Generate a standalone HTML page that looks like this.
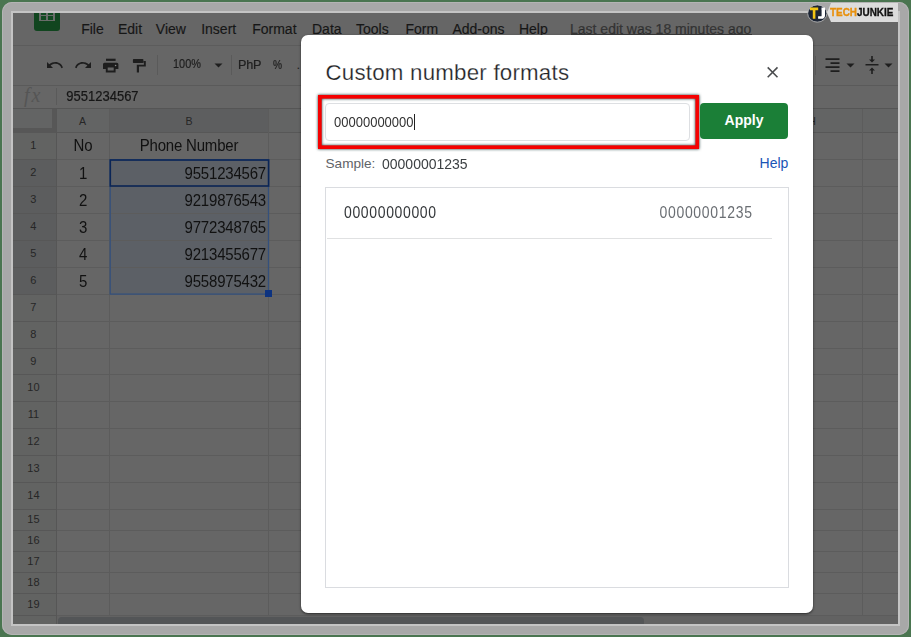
<!DOCTYPE html>
<html><head><meta charset="utf-8">
<style>
*{margin:0;padding:0;box-sizing:border-box}
html,body{width:911px;height:637px;overflow:hidden;background:#4a7550;font-family:"Liberation Sans",sans-serif}
.t{position:absolute;line-height:1;white-space:nowrap;font-family:"Liberation Sans",sans-serif}
.b{position:absolute}
#frame{position:absolute;left:2.4px;top:2.4px;width:906.3px;height:632.3px;border-radius:10px;background:#a8a8a8;box-shadow:inset 0 0 0 1px #b4b4b4}
#inner{position:absolute;left:11px;top:11px;width:889px;height:615px;background:#c4c4c4}
#sheet{position:absolute;left:0;top:0;width:911px;height:637px;clip-path:inset(13px 13px 13px 13px);background:#666666}
.hl{position:absolute;height:1px;background:#5c5c5c}
.vl{position:absolute;width:1px;background:#5c5c5c}
.menu{font-size:14px;color:#161616;-webkit-text-stroke:0.15px #161616}
.rn{font-size:11px;color:#262626;text-align:center;width:43px;left:13px}
.cell{font-size:15px;color:#111;letter-spacing:-0.2px;transform:scaleY(1.08);transform-origin:0 84.65%}
</style></head><body>
<div id="frame"></div>
<div id="inner"></div>
<div id="sheet">

<div class="hl" style="left:13px;top:45px;width:885px;background:#5c5c5c"></div>
<div class="hl" style="left:13px;top:85px;width:885px;background:#5a5a5a"></div>
<div class="hl" style="left:13px;top:108px;width:885px;background:#555555"></div>
<div class="b" style="left:13px;top:109px;width:43px;height:516px;background:#626362"></div>
<div class="b" style="left:13px;top:109px;width:885px;height:23px;background:#636464"></div>
<div class="b" style="left:110px;top:109px;width:158px;height:23px;background:#5d5e5f"></div>
<div class="b" style="left:13px;top:160px;width:43px;height:134px;background:#5c5d5e"></div>
<div class="b" style="left:110px;top:159px;width:159px;height:135px;background:#5c6066"></div>
<div class="hl" style="left:13px;top:132px;width:885px"></div>
<div class="hl" style="left:13px;top:159px;width:885px"></div>
<div class="hl" style="left:13px;top:186px;width:885px"></div>
<div class="hl" style="left:13px;top:213px;width:885px"></div>
<div class="hl" style="left:13px;top:240px;width:885px"></div>
<div class="hl" style="left:13px;top:267px;width:885px"></div>
<div class="hl" style="left:13px;top:294px;width:885px"></div>
<div class="hl" style="left:13px;top:321px;width:885px"></div>
<div class="hl" style="left:13px;top:348px;width:885px"></div>
<div class="hl" style="left:13px;top:374px;width:885px"></div>
<div class="hl" style="left:13px;top:401px;width:885px"></div>
<div class="hl" style="left:13px;top:428px;width:885px"></div>
<div class="hl" style="left:13px;top:455px;width:885px"></div>
<div class="hl" style="left:13px;top:482px;width:885px"></div>
<div class="hl" style="left:13px;top:509px;width:885px"></div>
<div class="hl" style="left:13px;top:530px;width:885px"></div>
<div class="hl" style="left:13px;top:551px;width:885px"></div>
<div class="hl" style="left:13px;top:572px;width:885px"></div>
<div class="hl" style="left:13px;top:593px;width:885px"></div>
<div class="hl" style="left:13px;top:615px;width:885px"></div>
<div class="hl" style="left:13px;top:132px;width:885px;background:#575757"></div>
<div class="vl" style="left:109px;top:109px;height:506px"></div>
<div class="vl" style="left:268px;top:109px;height:506px"></div>
<div class="vl" style="left:862px;top:109px;height:506px"></div>
<div class="vl" style="left:56px;top:109px;height:515px;background:#565656"></div>
<div class="hl" style="left:13px;top:132px;width:43px;background:#575757"></div>
<div class="hl" style="left:13px;top:159px;width:43px;background:#575757"></div>
<div class="hl" style="left:13px;top:186px;width:43px;background:#575757"></div>
<div class="hl" style="left:13px;top:213px;width:43px;background:#575757"></div>
<div class="hl" style="left:13px;top:240px;width:43px;background:#575757"></div>
<div class="hl" style="left:13px;top:267px;width:43px;background:#575757"></div>
<div class="hl" style="left:13px;top:294px;width:43px;background:#575757"></div>
<div class="hl" style="left:13px;top:321px;width:43px;background:#575757"></div>
<div class="hl" style="left:13px;top:348px;width:43px;background:#575757"></div>
<div class="hl" style="left:13px;top:374px;width:43px;background:#575757"></div>
<div class="hl" style="left:13px;top:401px;width:43px;background:#575757"></div>
<div class="hl" style="left:13px;top:428px;width:43px;background:#575757"></div>
<div class="hl" style="left:13px;top:455px;width:43px;background:#575757"></div>
<div class="hl" style="left:13px;top:482px;width:43px;background:#575757"></div>
<div class="hl" style="left:13px;top:509px;width:43px;background:#575757"></div>
<div class="hl" style="left:13px;top:530px;width:43px;background:#575757"></div>
<div class="hl" style="left:13px;top:551px;width:43px;background:#575757"></div>
<div class="hl" style="left:13px;top:572px;width:43px;background:#575757"></div>
<div class="hl" style="left:13px;top:593px;width:43px;background:#575757"></div>
<div class="hl" style="left:13px;top:615px;width:43px;background:#575757"></div>
<div class="b" style="left:52px;top:109px;width:4px;height:24px;background:#575757"></div>
<div class="b" style="left:13px;top:128px;width:43px;height:4px;background:#575757"></div>
<div class="b" style="left:57px;top:616px;width:841px;height:8px;background:#626262"></div>
<div class="b" style="left:57.5px;top:616.8px;width:586.5px;height:8px;background:#535557;border-radius:4px 4px 0 0"></div>
<div class="t rn" style="top:140.0px;left:11.9px">1</div>
<div class="t rn" style="top:167.0px;left:11.9px">2</div>
<div class="t rn" style="top:194.0px;left:11.9px">3</div>
<div class="t rn" style="top:221.0px;left:11.9px">4</div>
<div class="t rn" style="top:248.0px;left:11.9px">5</div>
<div class="t rn" style="top:275.0px;left:11.9px">6</div>
<div class="t rn" style="top:302.0px;left:11.9px">7</div>
<div class="t rn" style="top:329.0px;left:11.9px">8</div>
<div class="t rn" style="top:355.5px;left:11.9px">9</div>
<div class="t rn" style="top:382.0px;left:11.9px">10</div>
<div class="t rn" style="top:409.0px;left:11.9px">11</div>
<div class="t rn" style="top:436.0px;left:11.9px">12</div>
<div class="t rn" style="top:463.0px;left:11.9px">13</div>
<div class="t rn" style="top:490.0px;left:11.9px">14</div>
<div class="t rn" style="top:514.0px;left:11.9px">15</div>
<div class="t rn" style="top:535.0px;left:11.9px">16</div>
<div class="t rn" style="top:556.0px;left:11.9px">17</div>
<div class="t rn" style="top:577.0px;left:11.9px">18</div>
<div class="t rn" style="top:598.5px;left:11.9px">19</div>
<div class="t menu" style="left:81.2px;top:22.4px">File</div>
<div class="t menu" style="left:118.0px;top:22.4px">Edit</div>
<div class="t menu" style="left:155.8px;top:22.4px">View</div>
<div class="t menu" style="left:201.2px;top:22.4px">Insert</div>
<div class="t menu" style="left:252.2px;top:22.4px">Format</div>
<div class="t menu" style="left:312.0px;top:22.4px">Data</div>
<div class="t menu" style="left:356.0px;top:22.4px">Tools</div>
<div class="t menu" style="left:405.4px;top:22.4px">Form</div>
<div class="t menu" style="left:452.4px;top:22.4px">Add-ons</div>
<div class="t menu" style="left:518.9px;top:22.4px">Help</div>
<div class="t menu" style="left:570.0px;top:22.4px;color:#363636">Last edit was 18 minutes ago</div>
<div class="b" style="left:571px;top:34px;width:181px;height:1px;background:#3a3a3a"></div>
<div class="b" style="left:34px;top:5px;width:26px;height:26.3px;background:#11451f;border-radius:3px"></div>
<div class="b" style="left:39px;top:5px;width:16px;height:16.3px;background:#6a6d6a"></div>
<div class="b" style="left:41px;top:5px;width:5px;height:9.5px;background:#134a22"></div>
<div class="b" style="left:48px;top:5px;width:5px;height:9.5px;background:#134a22"></div>
<div class="b" style="left:41px;top:16px;width:5px;height:3.5px;background:#134a22"></div>
<div class="b" style="left:48px;top:16px;width:5px;height:3.5px;background:#134a22"></div>
<svg class="b" style="left:44px;top:56px" width="20" height="18" viewBox="0 0 20 18"><path d="M3 6 L3 12 L9 12 L6.6 9.6 C8 8.4 9.6 7.8 11.4 7.8 C14.4 7.8 16.6 9.6 17.4 12.2 L19 11.6 C17.9 8.2 15 6 11.4 6 C9.1 6 7 6.9 5.3 8.3 Z" fill="#1e1e1e"/></svg>
<svg class="b" style="left:73.8px;top:56px" width="20" height="18" viewBox="0 0 20 18"><g transform="translate(20,0) scale(-1,1)"><path d="M3 6 L3 12 L9 12 L6.6 9.6 C8 8.4 9.6 7.8 11.4 7.8 C14.4 7.8 16.6 9.6 17.4 12.2 L19 11.6 C17.9 8.2 15 6 11.4 6 C9.1 6 7 6.9 5.3 8.3 Z" fill="#1e1e1e"/></g></svg>
<svg class="b" style="left:100px;top:54px" width="50" height="22" viewBox="0 0 50 22"><rect x="6" y="4.7" width="9.6" height="2.2" fill="#1e1e1e"/><path d="M3 10.3 Q3 8.8 4.5 8.8 H16.9 Q18.4 8.8 18.4 10.3 V15.1 H15.6 V18.4 H5.8 V15.1 H3 Z M7.7 13.4 V16.5 H13.7 V13.4 Z" fill="#1e1e1e" fill-rule="evenodd"/><circle cx="15.6" cy="11.5" r="0.8" fill="#8a8a8a"/><rect x="32.9" y="4.9" width="10.5" height="4.2" rx="0.8" fill="#1e1e1e"/><path d="M43.4 6.9 H45.8 V12.6 H39 V18.4 H36.8 V10.7 H43.9 V8.8 H43.4 Z" fill="#1e1e1e"/></svg>
<div class="b" style="left:157px;top:55px;width:1px;height:20px;background:#5a5a5a"></div>
<div class="b" style="left:231px;top:55px;width:1px;height:20px;background:#5a5a5a"></div>
<div class="b" style="left:815px;top:56px;width:1px;height:19px;background:#5a5a5a"></div>
<div class="t" style="left:173.2px;top:58.0px;font-size:12.7px;color:#1e1e1e;-webkit-text-stroke:0.2px #1e1e1e;transform:scaleX(0.86);transform-origin:0 0">100%</div>
<svg class="b" style="left:214px;top:63px" width="9" height="5" viewBox="0 0 9 5"><path d="M0.5 0.5h8l-4 4z" fill="#1e1e1e"/></svg>
<div class="t" style="left:238px;top:57.9px;font-size:13.3px;letter-spacing:-0.3px;color:#1e1e1e;-webkit-text-stroke:0.2px #1e1e1e;transform:scaleX(0.95);transform-origin:0 0">PhP</div>
<div class="t" style="left:272.8px;top:59.0px;font-size:12px;color:#1e1e1e;-webkit-text-stroke:0.2px #1e1e1e;transform:scaleX(0.85);transform-origin:0 0">%</div>
<div class="t" style="left:296.5px;top:58.2px;font-size:13px;color:#1e1e1e">.</div>
<svg class="b" style="left:824px;top:57px" width="17" height="17" viewBox="0 0 17 17"><path d="M1.5 1.3h14v1.6h-14z M6.5 5.3h9v1.6h-9z M1.5 9.3h14v1.6h-14z M6.5 13.3h9v1.6h-9z" fill="#1e1e1e"/></svg>
<svg class="b" style="left:846px;top:63px" width="9" height="5" viewBox="0 0 9 5"><path d="M0.5 0.5h8l-4 4z" fill="#1e1e1e"/></svg>
<svg class="b" style="left:864px;top:55px" width="16" height="20" viewBox="0 0 16 20"><path d="M1.5 9h13v1.6h-13z M7.2 1h1.6v3.5h2.2L8 7.6 5 4.5h2.2z M7.2 19h1.6v-3.5h2.2L8 12.4 5 15.5h2.2z" fill="#1e1e1e"/></svg>
<svg class="b" style="left:884px;top:63px" width="9" height="5" viewBox="0 0 9 5"><path d="M0.5 0.5h8l-4 4z" fill="#1e1e1e"/></svg>
<div class="t" style="left:24px;top:85px;font-family:'Liberation Serif',serif;font-style:italic;font-size:20px;letter-spacing:2px;color:#555">fx</div>
<div class="b" style="left:56px;top:88px;width:1px;height:17px;background:#5a5a5a"></div>
<div class="t" style="left:66.3px;top:90.0px;font-size:13px;color:#161616;-webkit-text-stroke:0.2px #161616;transform:scaleY(1.07);transform-origin:0 84.65%">9551234567</div>
<div class="t" style="left:56px;width:53px;text-align:center;top:116.0px;font-size:10.6px;color:#262626">A</div>
<div class="t" style="left:110px;width:158px;text-align:center;top:116.0px;font-size:10.6px;color:#262626">B</div>
<div class="t" style="left:762px;width:100px;text-align:center;top:116.0px;font-size:10.6px;color:#262626">H</div>
<div class="t cell" style="left:56px;width:54px;text-align:center;top:138.3px">No</div>
<div class="t cell" style="left:110px;width:158px;text-align:center;top:138.3px">Phone Number</div>
<div class="t cell" style="left:56px;width:54px;text-align:center;top:165.5px">1</div>
<div class="t cell" style="left:110px;width:156px;text-align:right;top:165.5px">9551234567</div>
<div class="t cell" style="left:56px;width:54px;text-align:center;top:192.5px">2</div>
<div class="t cell" style="left:110px;width:156px;text-align:right;top:192.5px">9219876543</div>
<div class="t cell" style="left:56px;width:54px;text-align:center;top:219.5px">3</div>
<div class="t cell" style="left:110px;width:156px;text-align:right;top:219.5px">9772348765</div>
<div class="t cell" style="left:56px;width:54px;text-align:center;top:246.5px">4</div>
<div class="t cell" style="left:110px;width:156px;text-align:right;top:246.5px">9213455677</div>
<div class="t cell" style="left:56px;width:54px;text-align:center;top:273.5px">5</div>
<div class="t cell" style="left:110px;width:156px;text-align:right;top:273.5px">9558975432</div>
<svg class="b" style="left:100px;top:150px" width="180" height="160"><rect x="10.2" y="9.8" width="158.3" height="134.3" fill="none" stroke="#34507c" stroke-width="1.3"/><rect x="10.3" y="10" width="158.3" height="26" fill="none" stroke="#0a2556" stroke-width="1.6"/></svg>
<div class="b" style="left:265px;top:290px;width:6.5px;height:6.5px;background:#0d3380"></div>
</div>
<div class="b" style="left:301px;top:35px;width:512px;height:577.8px;background:#fff;border-radius:7px;box-shadow:0 1px 2.5px rgba(0,0,0,0.6)"></div>
<div class="t" style="left:325.5px;top:62.1px;font-size:22.3px;letter-spacing:0.22px;color:#202124;-webkit-text-stroke:0.25px #fff">Custom number formats</div>
<svg class="b" style="left:765px;top:65px" width="15" height="15" viewBox="0 0 15 15"><path d="M2.7 2.4L12.5 12.2M12.5 2.4L2.7 12.2" stroke="#4a4c4e" stroke-width="1.55"/></svg>
<svg class="b" style="left:310px;top:88px;filter:drop-shadow(0 0.3px 1.4px rgba(0,40,40,0.9))" width="400" height="70"><rect x="9.85" y="8.8" width="377.4" height="50.4" fill="none" stroke="#f50000" stroke-width="3.7"/></svg>
<div class="b" style="left:325px;top:102.6px;width:365px;height:38.2px;border:1px solid #dddfe2;border-radius:4px"></div>
<div class="t" style="left:334px;top:116.3px;font-size:13px;color:#333;transform:scaleY(1.19);transform-origin:0 84.65%">00000000000</div>
<div class="b" style="left:414px;top:114px;width:1px;height:16px;background:#222"></div>
<div class="b" style="left:700px;top:102.5px;width:88px;height:36px;background:#1b7f37;border-radius:4px"></div>
<div class="t" style="left:700px;width:88px;text-align:center;top:113.4px;font-size:14px;font-weight:bold;color:#fff">Apply</div>
<div class="t" style="left:325.5px;top:157.0px;font-size:13.6px;color:#5f6368">Sample:</div>
<div class="t" style="left:382px;top:156.6px;font-size:14px;color:#3c4043;transform:scaleY(1.06);transform-origin:0 84.65%">00000001235</div>
<div class="t" style="left:759.6px;top:156.1px;font-size:14px;color:#1a55b5">Help</div>
<div class="b" style="left:325px;top:187px;width:464px;height:401px;border:1px solid #dadce0"></div>
<div class="t" style="left:344px;top:206.4px;font-size:14px;color:#333639;letter-spacing:0.64px;transform:scaleY(1.18);transform-origin:0 84.65%">00000000000</div>
<div class="t" style="left:659.5px;top:206.4px;font-size:14px;color:#6a6e73;letter-spacing:0.68px;transform:scaleY(1.18);transform-origin:0 84.65%">00000001235</div>
<div class="b" style="left:327px;top:238px;width:445px;height:1px;background:#e0e1e2"></div>
<svg class="b" style="left:800px;top:0px" width="111" height="30" viewBox="0 0 111 30"><path d="M31 3 L98 3 L98 22 L31 22 L27 13 Z" fill="#dcdcdc"/><ellipse cx="17.3" cy="13.5" rx="9.6" ry="8.6" fill="#1c2535" stroke="#bdbdbd" stroke-width="0.8"/><path d="M10 7.6h8.2v2.6h-2.8v8.6h-2.6v-8.6H10z" fill="#f2c514"/><path d="M21.5 7.6h3.5v7.8c0 2.4-1.4 3.4-3.6 3.4h-3.3v-2.5h2.8c0.5 0 0.7-0.3 0.7-0.9V10h-0.1z" fill="#fff"/></svg>
<div class="t" style="left:830px;top:6.2px;font-size:11.6px;font-weight:bold;color:#e8900c;letter-spacing:0px;-webkit-text-stroke-width:0.35px;transform:scaleX(0.855);transform-origin:0 0">TECH<span style="color:#111">JUNKIE</span></div>
</body></html>
